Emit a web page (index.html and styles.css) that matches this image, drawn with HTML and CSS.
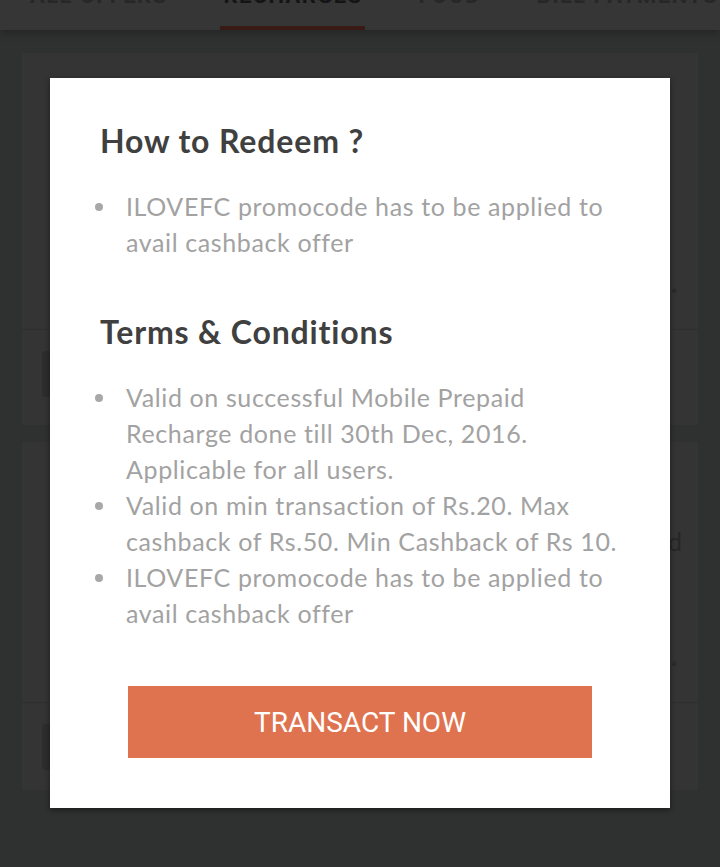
FILE: index.html
```html
<!DOCTYPE html>
<html>
<head>
<meta charset="utf-8">
<link rel="stylesheet" href="styles.css">
</head>
<body>
<header class="tabs">
  <div class="tab"><span class="tab-label">ALL OFFERS</span></div>
  <div class="tab active"><span class="tab-label">RECHARGES</span></div>
  <div class="tab"><span class="tab-label">FOOD</span></div>
  <div class="tab"><span class="tab-label">BILL PAYMENTS</span></div>
</header>
<main class="offers">
  <section class="card card-one">
    <div class="card-body">
      <p class="card-line">Get Rs.50 cashback on Mobile Prepaid Recharge. T&amp;C*</p>
    </div>
    <div class="card-foot"><div class="code-box"></div></div>
  </section>
  <section class="card card-two">
    <div class="card-body">
      <p class="card-line card-line-mid">Get cashback on Prepaid Recharge and Postpaid bills paid</p>
      <p class="card-line">Valid on all operators. T&amp;C*</p>
    </div>
    <div class="card-foot"><div class="code-box"></div></div>
  </section>
</main>

<div class="modal">
  <h2 class="modal-title">How to Redeem ?</h2>
  <ul class="points first">
    <li>ILOVEFC promocode has to be applied to avail cashback offer</li>
  </ul>
  <h2 class="modal-title">Terms &amp; Conditions</h2>
  <ul class="points">
    <li>Valid on successful Mobile Prepaid Recharge done till 30th Dec, 2016. Applicable for all users.</li>
    <li>Valid on min transaction of Rs.20. Max cashback of Rs.50. Min Cashback of Rs 10.</li>
    <li>ILOVEFC promocode has to be applied to avail cashback offer</li>
  </ul>
  <button class="cta">TRANSACT NOW</button>
</div>
</body>
</html>
```
FILE: styles.css
```css
* { box-sizing: border-box; }
html, body { margin: 0; padding: 0; }
body {
  background: #2f3030;
  width: 720px;
  height: 867px;
  overflow: hidden;
  position: relative;
  font-family: Lato, "Open Sans", sans-serif;
}

.tabs {
  height: 30px;
  background: #363636;
  display: flex;
  gap: 50px;
  padding-left: 27px;
  overflow: hidden;
  box-shadow: 0 3px 8px rgba(0,0,0,0.25);
  position: relative;
  z-index: 1;
}
.tab {
  height: 30px;
  padding: 0 3px;
  border-bottom: 4px solid transparent;
  flex: none;
}
.tab.active { border-bottom-color: #3a1a15; }
.tab-label {
  display: block;
  margin-top: -15px;
  font-family: Roboto, sans-serif;
  font-weight: 700;
  font-size: 22px;
  line-height: 22px;
  letter-spacing: 1.4px;
  color: #272727;
  white-space: nowrap;
}
.tab.active .tab-label { color: #141414; }

.offers {
  padding: 23px 22px 0;
  display: flex;
  flex-direction: column;
  gap: 17px;
}
.card {
  background: #353434;
  display: flex;
  flex-direction: column;
}
.card-body {
  display: flex;
  flex-direction: column;
  justify-content: flex-end;
  align-items: flex-end;
  padding: 0 20px 24px;
  border-bottom: 1px solid #2e2e2e;
}
.card-one .card-body { height: 277px; }
.card-two .card-body { height: 261px; }
.card-one .card-foot { height: 95px; }
.card-two .card-foot { height: 87px; }
.card-foot { padding: 21px 20px 0; }
.code-box {
  width: 240px;
  height: 46px;
  border-radius: 4px;
  background: #2d2d2d;
}
.card-line {
  margin: 0;
  font-size: 18px;
  color: #262626;
  white-space: nowrap;
}
.card-line-mid {
  font-size: 25px;
  margin-bottom: 100px;
  margin-right: -4px;
}

.modal {
  position: absolute;
  left: 50px;
  top: 78px;
  width: 620px;
  background: #ffffff;
  padding: 43px 48px 50px;
  box-shadow: 0 2px 6px rgba(0,0,0,0.45);
  z-index: 5;
}
.modal-title {
  margin: 0 0 27px 2px;
  font-family: Lato, sans-serif;
  font-weight: 700;
  font-size: 32px;
  line-height: 40px;
  letter-spacing: 0.85px;
  color: #404040;
}
.points {
  list-style: none;
  margin: 0 0 52px;
  padding: 0;
}
.points li {
  position: relative;
  padding-left: 28px;
  font-size: 25px;
  line-height: 36px;
  letter-spacing: 0.62px;
  color: #a2a2a2;
}
.points li::before {
  content: "";
  position: absolute;
  left: -3px;
  top: 15px;
  width: 8px;
  height: 8px;
  border-radius: 50%;
  background: #a8a8a8;
}
.points:last-of-type { margin-bottom: 55px; }

.cta {
  display: block;
  margin: 0 auto;
  width: 464px;
  height: 72px;
  border: 0;
  background: #e0734f;
  color: #ffffff;
  font-family: Roboto, sans-serif;
  font-size: 28px;
  font-weight: 400;
  letter-spacing: 0;
}
```
